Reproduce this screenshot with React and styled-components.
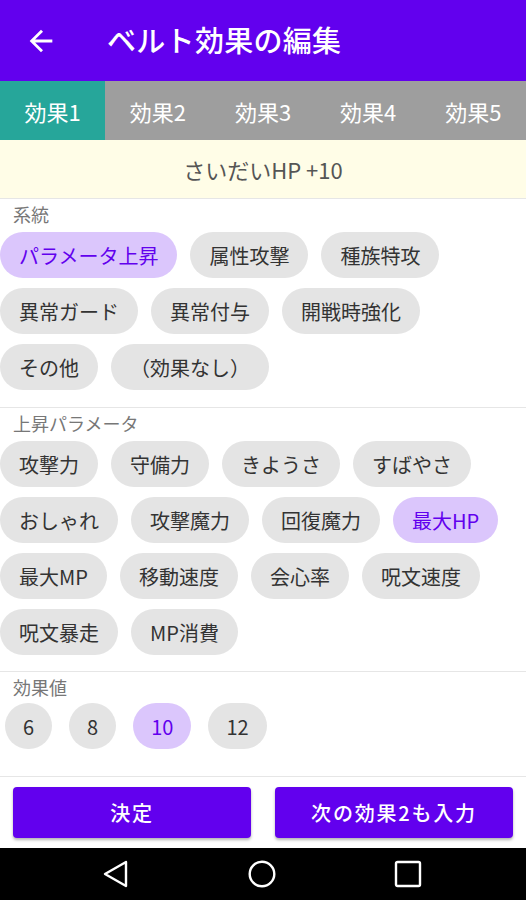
import React from "react";
import styled, { createGlobalStyle } from "styled-components";

const Global = createGlobalStyle`
  html, body { margin: 0; padding: 0; background: #fff; }
  body { font-family: "Noto Sans CJK JP", "Noto Sans", Roboto, sans-serif; }
  * { box-sizing: border-box; }
`;

const Screen = styled.div`
  width: 526px;
  height: 900px;
  display: flex;
  flex-direction: column;
  background: #fff;
  overflow: hidden;
`;

const AppBar = styled.header`
  height: 81px;
  flex-shrink: 0;
  background: #6200ee;
  display: flex;
  align-items: center;
  padding-left: 24px;
  gap: 49px;
  color: #fff;
`;

const Title = styled.h1`
  margin: 0;
  font-size: 29px;
  font-weight: 500;
  letter-spacing: 0.3px;
  line-height: 1;
  padding-bottom: 2px;
`;

const Tabs = styled.nav`
  height: 59px;
  flex-shrink: 0;
  display: grid;
  grid-template-columns: repeat(5, 1fr);
  background: #9e9e9e;
`;

const Tab = styled.div`
  display: flex;
  align-items: center;
  justify-content: center;
  color: #fff;
  font-size: 22px;
  background: ${(p) => (p.$active ? "#26a69a" : "transparent")};
`;

const Summary = styled.div`
  height: 59px;
  flex-shrink: 0;
  background: #fffde7;
  display: flex;
  align-items: center;
  justify-content: center;
  font-size: 22px;
  color: #555;
  border-bottom: 1px solid #e6e6e6;
`;

const Section = styled.section`
  padding: 4px 0 ${(p) => p.$bottom}px;
  border-bottom: 1px solid #e6e6e6;
  flex-shrink: 0;
`;

const Label = styled.div`
  font-size: 18px;
  color: #777;
  padding-left: 13px;
  line-height: 22px;
  margin-bottom: ${(p) => p.$gap ?? 7}px;
`;

const ChipGroup = styled.div`
  display: flex;
  flex-wrap: wrap;
  column-gap: ${(p) => p.$gap ?? 13}px;
  row-gap: 10px;
  padding-left: ${(p) => p.$left ?? 0}px;
`;

const Chip = styled.div`
  height: 46px;
  border-radius: 23px;
  padding: 0 ${(p) => p.$pad ?? 19}px;
  display: flex;
  align-items: center;
  justify-content: center;
  font-size: 20px;
  background: ${(p) => (p.$selected ? "#dbc6fc" : "#e4e4e4")};
  color: ${(p) => (p.$selected ? "#6200ee" : "#333")};
`;

const Actions = styled.div`
  flex: 1;
  display: flex;
  gap: 24px;
  padding: 10px 13px 0;
`;

const Button = styled.button`
  flex: 1;
  height: 51px;
  border: none;
  border-radius: 4px;
  background: #6200ee;
  color: #fff;
  font-family: inherit;
  font-size: 20px;
  font-weight: 500;
  letter-spacing: 0.09em;
  box-shadow: 0 2px 3px rgba(0, 0, 0, 0.3);
`;

const NavBar = styled.div`
  height: 52px;
  flex-shrink: 0;
  background: #000;
  display: flex;
  align-items: center;
  justify-content: center;
  gap: 118px;
  padding-right: 2px;
`;

const BackArrow = () => (
  <svg width="34" height="34" viewBox="0 0 24 24">
    <path d="M20 11H7.83l5.59-5.59L12 4l-8 8 8 8 1.41-1.41L7.83 13H20v-2z" fill="#fff" />
  </svg>
);

const kei = [
  ["パラメータ上昇", true],
  ["属性攻撃"],
  ["種族特攻"],
  ["異常ガード"],
  ["異常付与"],
  ["開戦時強化"],
  ["その他"],
  ["（効果なし）"],
];

const params = [
  ["攻撃力"],
  ["守備力"],
  ["きようさ"],
  ["すばやさ"],
  ["おしゃれ"],
  ["攻撃魔力"],
  ["回復魔力"],
  ["最大HP", true],
  ["最大MP"],
  ["移動速度"],
  ["会心率"],
  ["呪文速度"],
  ["呪文暴走"],
  ["MP消費"],
];

const values = [["6"], ["8"], ["10", true], ["12"]];

export default function App() {
  return (
    <Screen>
      <Global />
      <AppBar>
        <BackArrow />
        <Title>ベルト効果の編集</Title>
      </AppBar>
      <Tabs>
        {[1, 2, 3, 4, 5].map((n) => (
          <Tab key={n} $active={n === 1}>効果{n}</Tab>
        ))}
      </Tabs>
      <Summary>さいだいHP +10</Summary>
      <Section $bottom={17}>
        <Label>系統</Label>
        <ChipGroup>
          {kei.map(([t, s]) => (
            <Chip key={t} $selected={s}>{t}</Chip>
          ))}
        </ChipGroup>
      </Section>
      <Section $bottom={16}>
        <Label>上昇パラメータ</Label>
        <ChipGroup>
          {params.map(([t, s]) => (
            <Chip key={t} $selected={s}>{t}</Chip>
          ))}
        </ChipGroup>
      </Section>
      <Section $bottom={27}>
        <Label $gap={5}>効果値</Label>
        <ChipGroup $left={5} $gap={17}>
          {values.map(([t, s]) => (
            <Chip key={t} $selected={s} $pad={18}>{t}</Chip>
          ))}
        </ChipGroup>
      </Section>
      <Actions>
        <Button>決定</Button>
        <Button>次の効果2も入力</Button>
      </Actions>
      <NavBar>
        <svg width="28" height="28" viewBox="0 0 28 28">
          <path d="M24 2 L3 14 L24 26 Z" fill="none" stroke="#fff" strokeWidth="2.4" strokeLinejoin="round" />
        </svg>
        <svg width="28" height="28" viewBox="0 0 28 28">
          <circle cx="14" cy="14" r="12.3" fill="none" stroke="#fff" strokeWidth="2.4" />
        </svg>
        <svg width="28" height="28" viewBox="0 0 28 28">
          <rect x="2" y="2" width="24" height="24" rx="1.5" fill="none" stroke="#fff" strokeWidth="2.4" />
        </svg>
      </NavBar>
    </Screen>
  );
}
